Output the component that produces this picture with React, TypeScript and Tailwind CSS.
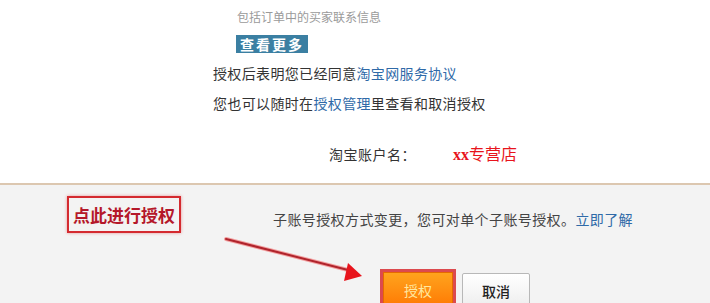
export default function App() {
  return (
    <div className="relative w-[710px] h-[303px] overflow-hidden bg-white font-['Noto_Sans_CJK_SC','Noto_Sans',sans-serif]">
      <div className="h-[183px] pt-[9px] bg-white">
        <p className="ml-[237px] text-[12px] leading-[16px] text-[#9a9a9a]">包括订单中的买家联系信息</p>
        <div className="mt-[10px] ml-[236px] w-fit h-[18px] px-[4px] bg-[#3b7fa2] text-white text-[14px] leading-[18px] font-bold tracking-[2px]">
          查看更多
        </div>
        <p className="mt-[10px] ml-[213px] text-[14px] leading-[20px] tracking-[0.35px] text-[#333]">
          授权后表明您已经同意<span className="text-[#2f6aa8]">淘宝网服务协议</span>
        </p>
        <p className="mt-[10px] ml-[213px] text-[14px] leading-[20px] tracking-[0.35px] text-[#333]">
          您也可以随时在<span className="text-[#2f6aa8]">授权管理</span>里查看和取消授权
        </p>
        <div className="mt-[30px] ml-[329px] flex items-baseline">
          <span className="text-[14px] leading-[20px] tracking-[0.5px] text-[#333]">淘宝账户名：</span>
          <span className="ml-[37px] text-[16px] leading-[20px] text-[#e8141c]">
            <span className="font-['Liberation_Serif',serif] font-bold">xx</span>专营店
          </span>
        </div>
      </div>
      <div className="h-[2px] bg-[#dcc7b0]" />
      <div className="h-[118px] bg-[#f3f3f3] pt-[11px]">
        <div className="flex items-center">
          <div className="ml-[67px] w-[114px] h-[37px] border-2 border-[#d42a2f] shadow-[0_0_3px_rgba(220,30,40,0.45)] flex items-center justify-center text-[17px] font-bold text-[#b5182a]">
            点此进行授权
          </div>
          <p className="ml-[92px] mt-[8px] text-[14px] leading-[20px] tracking-[0.4px] text-[#444]">
            子账号授权方式变更，您可对单个子账号授权。<span className="text-[#2f6aa8]">立即了解</span>
          </p>
        </div>
        <div className="mt-[36px] ml-[380px] flex items-start gap-[6px]">
          <div className="w-[76px] h-[44px] border-[3px] border-[#dc4a4e] bg-[#f06010]">
            <div className="h-full border border-[#e66a00] bg-gradient-to-b from-[#ffa31c] to-[#ff7600] pt-[7px] text-center text-[14px] leading-[20px] text-[#ffe8a0]">
              授权
            </div>
          </div>
          <div className="mt-[4px] w-[68px] h-[40px] border border-[#b8b8b8] rounded-[2px] bg-gradient-to-b from-white to-[#ebebeb] pt-[7px] text-center text-[14px] leading-[20px] font-medium text-[#222]">
            取消
          </div>
        </div>
      </div>
      <svg className="absolute left-0 top-0 pointer-events-none" width="710" height="303">
        <line x1="226" y1="239" x2="352" y2="271" stroke="#f3a0a0" strokeWidth="4" strokeLinecap="round" />
        <line x1="226" y1="239" x2="352" y2="271" stroke="#b0242c" strokeWidth="2" strokeLinecap="round" />
        <polygon points="362,276 348,263 344,281" fill="#e8141c" />
      </svg>
    </div>
  );
}
